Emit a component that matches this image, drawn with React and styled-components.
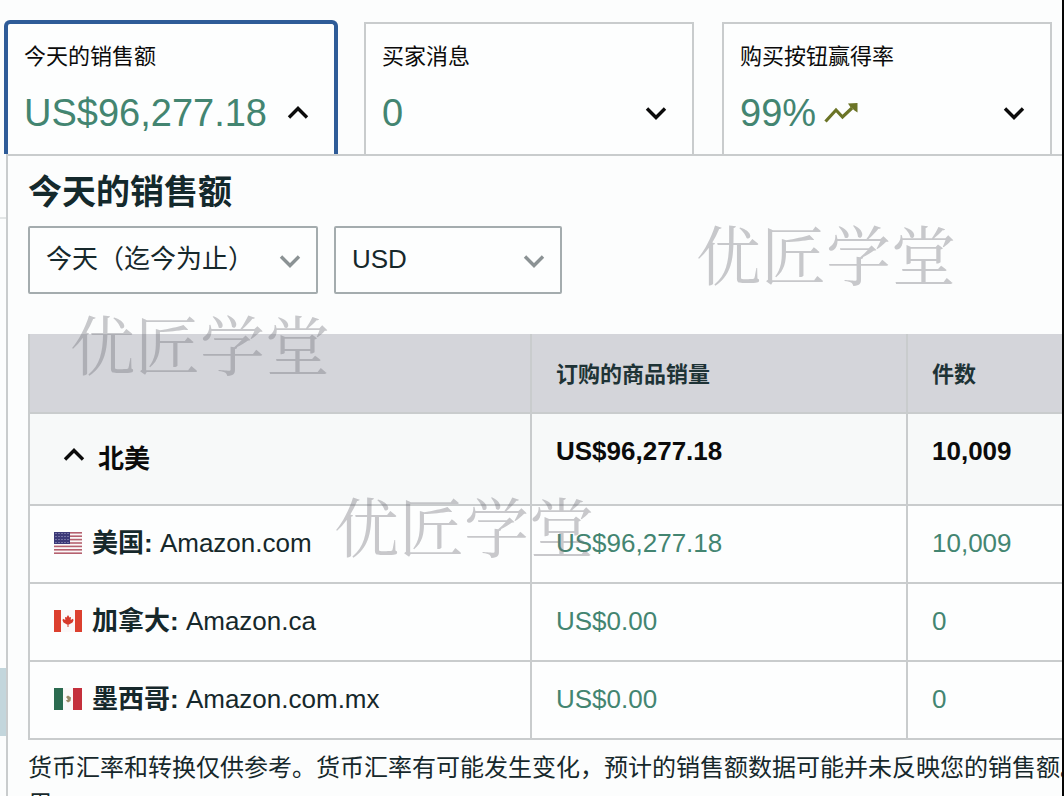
import React, { useState } from "react";
import styled, { createGlobalStyle } from "styled-components";

const GlobalStyle = createGlobalStyle`
  * { box-sizing: border-box; }
  body {
    margin: 0;
    background: #fcfdfd;
    color: #16282b;
    font-family: "Liberation Sans", "Noto Sans CJK SC", sans-serif;
    overflow: hidden;
  }
  button, select { font: inherit; color: inherit; }
`;

const Page = styled.main`
  position: relative;
  display: flex;
  flex-direction: column;
  height: 100vh;
  padding-top: 22px;
  border-right: 2px solid #050505;
  overflow: hidden;
`;

const CardRow = styled.div`
  display: grid;
  grid-template-columns: repeat(3, 1fr);
  gap: 28px;
  padding: 0 10px 0 6px;
`;

const Card = styled.button`
  display: grid;
  grid-template-columns: 1fr 24px;
  align-content: start;
  row-gap: 16px;
  height: 132px;
  padding: 17px 24px 0 16px;
  text-align: left;
  background: #fdfefe;
  border: 2px solid ${(p) => (p.$active ? "#2f5c98" : "#c9cccd")};
  border-bottom: 0;
  border-radius: ${(p) => (p.$active ? "4px 4px 0 0" : "0")};
  box-shadow: ${(p) => (p.$active ? "0 0 0 2px #2f5c98" : "none")};
`;

const CardLabel = styled.span`
  grid-column: 1 / -1;
  color: #0b0b0b;
  font-size: 22px;
  line-height: 32px;
`;

const CardValue = styled.span`
  display: flex;
  align-items: center;
  gap: 8px;
  color: #438571;
  font-size: 38px;
  line-height: 48px;
  white-space: nowrap;
`;

const Icon = styled.svg`
  display: block;
  flex: none;
  align-self: center;
  fill: none;
  stroke: ${(p) => p.$color || "#0b0b0b"};
  stroke-width: 3.4;
`;

const Body = styled.div`
  position: relative;
  z-index: 1;
  flex: 1;
  display: flex;
  background: #fcfdfd;
`;

const Gutter = styled.div`
  flex: none;
  width: 6px;
  display: flex;
  flex-direction: column;
`;

const GutterTop = styled.div`
  height: 65px;
  border-bottom: 2px solid #e3e6e6;
`;

const GutterBlock = styled.div`
  height: 68px;
  margin-top: 449px;
  background: #c3d6dc;
`;

const Panel = styled.section`
  flex: 1;
  min-width: 0;
  padding: 14px 0 0 20px;
  border-top: 2px solid #c9cccd;
  border-left: 2px solid #c9cccd;
`;

const Title = styled.h2`
  margin: 0 0 12px;
  color: #14292c;
  font-size: 34px;
  line-height: 44px;
`;

const Filters = styled.div`
  display: flex;
  gap: 16px;
  margin-bottom: 40px;
`;

const SelectBox = styled.label`
  position: relative;
  display: flex;
  width: ${(p) => p.$width};
`;

const Select = styled.select`
  appearance: none;
  width: 100%;
  height: 68px;
  padding: 0 48px 2px 16px;
  font-size: 26px;
  background: #fdfefe;
  border: 2px solid #a4acae;
  border-radius: 2px;
`;

const SelectArrow = styled.span`
  position: absolute;
  right: 16px;
  top: 25px;
  pointer-events: none;
`;

const Table = styled.table`
  width: 100%;
  table-layout: fixed;
  border-spacing: 0;
  border-left: 2px solid #c9cccd;
  font-size: 26px;
  line-height: 32px;
  text-align: left;
`;

const Col = styled.col`
  width: ${(p) => p.$width};
`;

const HeadCell = styled.th`
  height: 80px;
  padding: 4px 24px 0;
  font-size: 22px;
  font-weight: 700;
  color: #1e3336;
  background: #d4d5da;
  border-bottom: 2px solid #c9cccd;
  &:not(:last-child) { border-right: 2px solid #c9cccd; }
`;

const Cell = styled.td`
  height: ${(p) => (p.$summary ? "92px" : "78px")};
  padding: ${(p) => (p.$summary ? "0 24px 16px" : "0 24px 2px")};
  color: ${(p) => (p.$summary ? "#0b0b0b" : "#438571")};
  font-weight: ${(p) => (p.$summary ? 700 : 400)};
  background: ${(p) => (p.$summary ? "#f7f9f9" : "#fdfefe")};
  border-bottom: 2px solid #c9cccd;
  &:not(:last-child) { border-right: 2px solid #c9cccd; }
`;

const NameCell = styled(Cell).attrs({ as: "th", scope: "row" })`
  padding: ${(p) => (p.$summary ? "0 32px" : "0 24px 2px")};
  color: ${(p) => (p.$summary ? "#0b0b0b" : "#16282b")};
`;

const RegionToggle = styled.button`
  display: flex;
  align-items: flex-start;
  gap: 12px;
  padding: 0;
  background: none;
  border: 0;
  font-weight: 700;

  ${Icon} {
    align-self: flex-start;
    margin-top: 2px;
  }
`;

const Market = styled.span`
  display: flex;
  align-items: center;
  gap: 10px;
`;

const Note = styled.p`
  margin: 10px 0 0;
  font-size: 24px;
  line-height: 36px;
  white-space: nowrap;
`;

const Watermark = styled.span`
  position: absolute;
  z-index: 2;
  left: ${(p) => p.$left};
  top: ${(p) => p.$top};
  color: rgba(112, 114, 122, 0.38);
  font-family: "Noto Serif CJK SC", "Noto Sans CJK SC", serif;
  font-size: 65px;
  font-weight: 400;
  line-height: 72px;
  white-space: nowrap;
  pointer-events: none;
`;

function Chevron({ up, color }) {
  return (
    <Icon width="24" height="20" viewBox="0 0 24 20" $color={color} aria-hidden="true">
      <path d={up ? "M3 14.5L12 5.5L21 14.5" : "M3 5.5L12 14.5L21 5.5"} />
    </Icon>
  );
}

function TrendIcon() {
  return (
    <Icon width="36" height="24" viewBox="0 0 36 24" $color="#6b7426" aria-hidden="true">
      <path d="M1.500 20.500L12 9L18.500 16L28 7" strokeWidth="3.200" />
      <path d="M24 2.500L33.500 2V11.500L30.500 9.500L26 5.500Z" fill="#6b7426" stroke="none" />
    </Icon>
  );
}

function Flag({ country }) {
  return (
    <svg width="28" height="22" viewBox="0 0 28 22" aria-hidden="true">
      <rect width="28" height="22" fill="#fbf8f8" />
      {country === "us" && (
        <>
          {[0, 3.4, 6.8, 10.2, 13.6, 17, 20.4].map((y) => (
            <rect key={y} y={y} width="28" height="1.6" fill="#b5616f" />
          ))}
          <rect width="16" height="12" fill="#3c3a78" />
          {[2, 5, 8, 11].map((y) =>
            [2, 5, 8, 11, 14].map((x) => (
              <circle key={`${x}-${y}`} cx={x} cy={y - 0.5} r="0.6" fill="#b9b8d8" />
            ))
          )}
        </>
      )}
      {country === "ca" && (
        <>
          <rect width="7" height="22" fill="#dc402f" />
          <rect x="21" width="7" height="22" fill="#dc402f" />
          <path
            d="M14 5L15.500 7.500L17 7L16.700 10L19 8.700L19.500 10.300L18.500 12.500L15 14.500H14.500V17H13.500V14.500H13L9.500 12.500L8.500 10.300L9 8.700L11.300 10L11 7L12.500 7.500Z"
            fill="#d6392b"
          />
        </>
      )}
      {country === "mx" && (
        <>
          <rect width="9" height="22" fill="#2b6b50" />
          <rect x="19" width="9" height="22" fill="#c4303c" />
          <path d="M12 9L14 7.500L17 9.500L16.500 13L14 14.500L11.800 12.500L14 11.500Z" fill="#9a8a68" />
        </>
      )}
    </svg>
  );
}

const cards = [
  { label: "今天的销售额", value: "US$96,277.18" },
  { label: "买家消息", value: "0" },
  { label: "购买按钮赢得率", value: "99%", trend: true },
];

const markets = [
  { country: "us", name: "美国:", site: "Amazon.com", sales: "US$96,277.18", units: "10,009" },
  { country: "ca", name: "加拿大:", site: "Amazon.ca", sales: "US$0.00", units: "0" },
  { country: "mx", name: "墨西哥:", site: "Amazon.com.mx", sales: "US$0.00", units: "0" },
];

const SiteName = styled.span`
  font-weight: 400;
`;

export default function App() {
  const [active, setActive] = useState(0);
  const [open, setOpen] = useState(true);
  return (
    <Page>
      <GlobalStyle />
      <CardRow>
        {cards.map((card, i) => (
          <Card key={card.label} $active={i === active} aria-expanded={i === active} onClick={() => setActive(i)}>
            <CardLabel>{card.label}</CardLabel>
            <CardValue>
              {card.value}
              {card.trend && <TrendIcon />}
            </CardValue>
            <Chevron up={i === active} />
          </Card>
        ))}
      </CardRow>
      <Body>
        <Gutter>
          <GutterTop />
          <GutterBlock />
        </Gutter>
        <Panel>
          <Title>今天的销售额</Title>
          <Filters>
            <SelectBox $width="290px">
              <Select aria-label="日期范围">
                <option>今天（迄今为止）</option>
              </Select>
              <SelectArrow><Chevron color="#8b9294" /></SelectArrow>
            </SelectBox>
            <SelectBox $width="228px">
              <Select aria-label="货币">
                <option>USD</option>
              </Select>
              <SelectArrow><Chevron color="#8b9294" /></SelectArrow>
            </SelectBox>
          </Filters>
          <Table>
            <colgroup>
              <Col $width="502px" />
              <Col $width="376px" />
              <Col />
            </colgroup>
            <thead>
              <tr>
                <HeadCell aria-label="商城" />
                <HeadCell scope="col">订购的商品销量</HeadCell>
                <HeadCell scope="col">件数</HeadCell>
              </tr>
            </thead>
            <tbody>
              <tr>
                <NameCell $summary>
                  <RegionToggle aria-expanded={open} onClick={() => setOpen(!open)}>
                    <Chevron up={open} />
                    北美
                  </RegionToggle>
                </NameCell>
                <Cell $summary>US$96,277.18</Cell>
                <Cell $summary>10,009</Cell>
              </tr>
              {open && markets.map((m) => (
                <tr key={m.country}>
                  <NameCell>
                    <Market>
                      <Flag country={m.country} />
                      <span>
                        <b>{m.name}</b> <SiteName>{m.site}</SiteName>
                      </span>
                    </Market>
                  </NameCell>
                  <Cell>{m.sales}</Cell>
                  <Cell>{m.units}</Cell>
                </tr>
              ))}
            </tbody>
          </Table>
          <Note>
            货币汇率和转换仅供参考。货币汇率有可能发生变化，预计的销售额数据可能并未反映您的销售额。
            <br />
            用
          </Note>
        </Panel>
      </Body>
      <Watermark $left="696px" $top="216px">优匠学堂</Watermark>
      <Watermark $left="70px" $top="306px">优匠学堂</Watermark>
      <Watermark $left="334px" $top="488px">优匠学堂</Watermark>
    </Page>
  );
}
